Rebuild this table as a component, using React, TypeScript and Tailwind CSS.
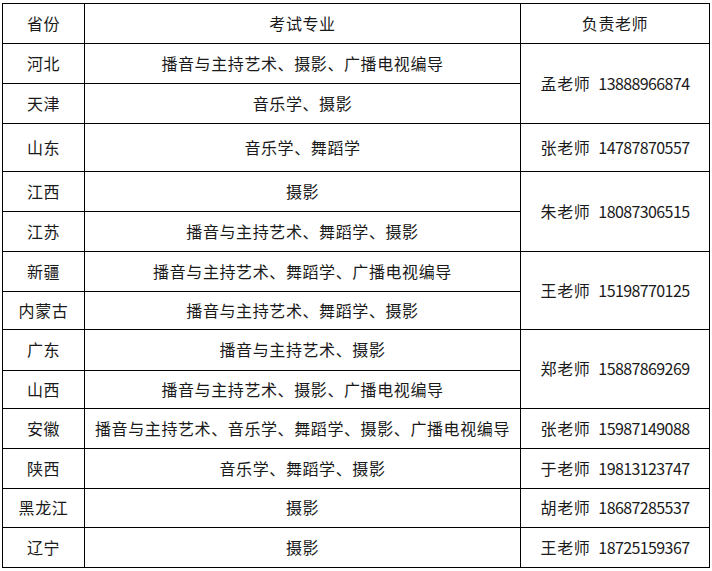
import React from "react";

type Row = {
  province: string;
  major: string;
  h: string;
  teacher?: { name: string; phone: string; span: number };
};

const ROWS: Row[] = [
  { province: "河北", major: "播音与主持艺术、摄影、广播电视编导", h: "h-[40px]", teacher: { name: "孟老师", phone: "13888966874", span: 2 } },
  { province: "天津", major: "音乐学、摄影", h: "h-[40px]" },
  { province: "山东", major: "音乐学、舞蹈学", h: "h-[48px]", teacher: { name: "张老师", phone: "14787870557", span: 1 } },
  { province: "江西", major: "摄影", h: "h-[40px]", teacher: { name: "朱老师", phone: "18087306515", span: 2 } },
  { province: "江苏", major: "播音与主持艺术、舞蹈学、摄影", h: "h-[40px]" },
  { province: "新疆", major: "播音与主持艺术、舞蹈学、广播电视编导", h: "h-[40px]", teacher: { name: "王老师", phone: "15198770125", span: 2 } },
  { province: "内蒙古", major: "播音与主持艺术、舞蹈学、摄影", h: "h-[38px]" },
  { province: "广东", major: "播音与主持艺术、摄影", h: "h-[41px]", teacher: { name: "郑老师", phone: "15887869269", span: 2 } },
  { province: "山西", major: "播音与主持艺术、摄影、广播电视编导", h: "h-[38px]" },
  { province: "安徽", major: "播音与主持艺术、音乐学、舞蹈学、摄影、广播电视编导", h: "h-[40px]", teacher: { name: "张老师", phone: "15987149088", span: 1 } },
  { province: "陕西", major: "音乐学、舞蹈学、摄影", h: "h-[40px]", teacher: { name: "于老师", phone: "19813123747", span: 1 } },
  { province: "黑龙江", major: "摄影", h: "h-[39px]", teacher: { name: "胡老师", phone: "18687285537", span: 1 } },
  { province: "辽宁", major: "摄影", h: "h-[40px]", teacher: { name: "王老师", phone: "18725159367", span: 1 } },
];

const cell = "border border-black p-0 pb-[2px] text-center align-middle";

export default function App() {
  return (
    <div className="min-h-[571px] w-[712px] bg-white pl-[2px] pt-[3px] font-['Noto_Sans_CJK_SC',sans-serif] text-[16px] leading-none tracking-[0.6px] text-[#1a1a1a]">
      <table className="w-[707px] table-fixed border-collapse">
        <colgroup>
          <col className="w-[82px]" />
          <col className="w-[436px]" />
          <col className="w-[189px]" />
        </colgroup>
        <thead>
          <tr className="h-[40px]">
            <th className={`${cell} font-normal`}>省份</th>
            <th className={`${cell} font-normal`}>考试专业</th>
            <th className={`${cell} font-normal`}>负责老师</th>
          </tr>
        </thead>
        <tbody>
          {ROWS.map((row) => (
            <tr key={row.province} className={row.h}>
              <td className={cell}>{row.province}</td>
              <td className={cell}>{row.major}</td>
              {row.teacher && (
                <td className={cell} rowSpan={row.teacher.span}>
                  {row.teacher.name}
                  <span className="ml-[8px] tracking-[-0.6px]">{row.teacher.phone}</span>
                </td>
              )}
            </tr>
          ))}
        </tbody>
      </table>
    </div>
  );
}
